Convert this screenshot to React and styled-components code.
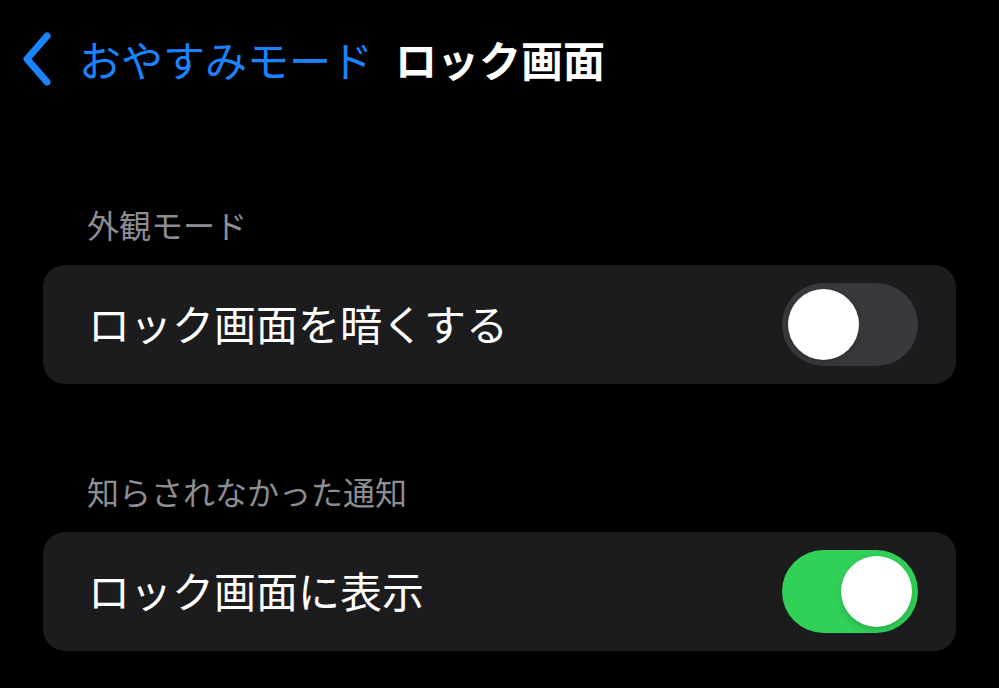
import React, { useState } from "react";
import styled, { createGlobalStyle } from "styled-components";

const GlobalStyle = createGlobalStyle`
  html, body {
    margin: 0;
    padding: 0;
    background: #000;
  }
  body {
    font-family: "Noto Sans CJK JP", "Noto Sans", sans-serif;
    -webkit-font-smoothing: antialiased;
  }
`;

const Page = styled.div`
  width: 999px;
  height: 688px;
  overflow: hidden;
  background: #000;
  padding: 0 43px;
  box-sizing: border-box;
`;

const NavBar = styled.div`
  height: 117px;
  display: flex;
  align-items: center;
  margin-left: -21px;
`;

const BackButton = styled.button`
  display: flex;
  align-items: center;
  gap: 27px;
  padding: 0;
  border: none;
  background: none;
  color: #1a84ff;
  font-family: inherit;
  font-size: 42px;
  line-height: 1;
  cursor: pointer;
`;

const Title = styled.h1`
  margin: 0 0 0 22px;
  color: #fff;
  font-size: 42px;
  font-weight: 700;
  line-height: 1;
`;

const SectionHeader = styled.div`
  height: 148px;
  display: flex;
  align-items: flex-end;
  box-sizing: border-box;
  padding: 0 0 21px 44px;
  color: #8d8d93;
  font-size: 32px;
  line-height: 40px;
`;

const Card = styled.div`
  height: 119px;
  display: flex;
  align-items: center;
  justify-content: space-between;
  padding: 0 38px 0 45px;
  background: #1c1c1e;
  border-radius: 22px;
`;

const Label = styled.span`
  color: #fff;
  font-size: 42px;
  line-height: 1;
  margin-bottom: 4px;
`;

const Track = styled.button`
  position: relative;
  width: 136px;
  height: 83px;
  padding: 0;
  border: none;
  border-radius: 42px;
  background: ${(p) => (p.$on ? "#31d158" : "#39393d")};
  cursor: pointer;
`;

const Knob = styled.span`
  position: absolute;
  top: 6px;
  left: ${(p) => (p.$on ? "59px" : "6px")};
  width: 71px;
  height: 71px;
  border-radius: 50%;
  background: #fff;
  box-shadow: 0 3px 8px rgba(0, 0, 0, 0.15), 0 1px 1px rgba(0, 0, 0, 0.1);
`;

const Toggle = ({ initial }) => {
  const [on, setOn] = useState(initial);
  return (
    <Track $on={on} onClick={() => setOn(!on)} aria-pressed={on}>
      <Knob $on={on} />
    </Track>
  );
};

const Chevron = () => (
  <svg width="30" height="54" viewBox="0 0 30 54" fill="none">
    <path
      d="M25 4 L5 27 L25 50"
      stroke="#1a84ff"
      strokeWidth="7"
      strokeLinecap="round"
      strokeLinejoin="round"
    />
  </svg>
);

const sections = [
  { header: "外観モード", label: "ロック画面を暗くする", on: false },
  { header: "知らされなかった通知", label: "ロック画面に表示", on: true },
];

export default function App() {
  return (
    <>
      <GlobalStyle />
      <Page>
        <NavBar>
          <BackButton>
            <Chevron />
            おやすみモード
          </BackButton>
          <Title>ロック画面</Title>
        </NavBar>
        {sections.map((s) => (
          <React.Fragment key={s.header}>
            <SectionHeader>{s.header}</SectionHeader>
            <Card>
              <Label>{s.label}</Label>
              <Toggle initial={s.on} />
            </Card>
          </React.Fragment>
        ))}
      </Page>
    </>
  );
}
